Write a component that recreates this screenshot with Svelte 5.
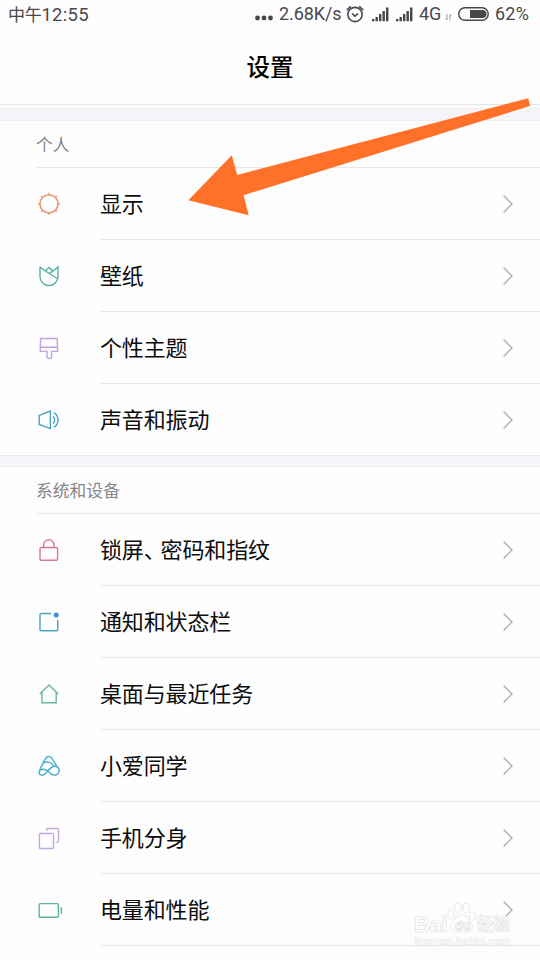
<script lang="ts">
    type Item = { icon: string; label: string };
    type Section = { title: string; items: Item[] };

    const sections: Section[] = [
        {
            title: "个人",
            items: [
                { icon: "display", label: "显示" },
                { icon: "wallpaper", label: "壁纸" },
                { icon: "theme", label: "个性主题" },
                { icon: "sound", label: "声音和振动" }
            ]
        },
        {
            title: "系统和设备",
            items: [
                { icon: "lock", label: "锁屏、密码和指纹" },
                { icon: "notification", label: "通知和状态栏" },
                { icon: "home", label: "桌面与最近任务" },
                { icon: "assistant", label: "小爱同学" },
                { icon: "clone", label: "手机分身" },
                { icon: "battery", label: "电量和性能" }
            ]
        }
    ];

    const rays = [0, 45, 90, 135, 180, 225, 270, 315];
</script>

{#snippet signal()}
    <svg class="signal" width="17" height="15" viewBox="0 0 17 15">
        <path d="M0 12h2.4v2.2H0zM3.5 10h2.4v4.2H3.5zM7 7h2.4v7.2H7zM10.5 4h2.4v10.2h-2.4zM14 .5h2.4v13.7H14z" />
    </svg>
{/snippet}

<div class="screen">
    <div class="status">
        <span class="time">中午<span class="digits">12:55</span></span>
        <svg class="dots" width="18" height="6" viewBox="0 0 18 6">
            <circle cx="2.5" cy="3" r="2.4" />
            <circle cx="9" cy="3" r="2.4" />
            <circle cx="15.5" cy="3" r="2.4" />
        </svg>
        <span class="speed">2.68K/s</span>
        <svg class="alarm" width="18" height="18" viewBox="0 0 18 18">
            <circle cx="9" cy="9.5" r="7.1" />
            <path d="M.8 5.2 4.8 1.4M17.2 5.2l-4-3.8M6 8.5l3 2.6 3-2.6" />
        </svg>
        {@render signal()}
        {@render signal()}
        <span class="network">4G</span>
        <svg class="data" width="7" height="7" viewBox="0 0 7 7">
            <path d="M2 0v6M.3 4.2 2 6M5 6.5v-6M6.7 2.3 5 .5" />
        </svg>
        <svg class="charge" width="31" height="14" viewBox="0 0 31 14">
            <rect class="shell" x=".8" y=".8" width="29.4" height="12.4" rx="6" />
            <path d="M12 3h12.5a4 4 0 0 1 0 8H12z" />
        </svg>
        <span class="percent">62%</span>
    </div>

    <header>设置</header>

    {#each sections as section}
        <div class="gap"></div>
        <section>
            <h2>{section.title}</h2>
            {#each section.items as item}
                <div class="row">
                    <svg class="icon {item.icon}" width="26" height="24" viewBox="0 0 26 24">
                        {#if item.icon === "display"}
                            <circle cx="12" cy="11.8" r="9" />
                            {#each rays as angle}
                                <path d="M12 2.8V.8" transform="rotate({angle} 12 11.8)" />
                            {/each}
                        {:else if item.icon === "wallpaper"}
                            <path d="M3 3v9.6a9 9 0 0 0 18 0V3l-5.2 4.2M3 3l5.4 4L20.8 15M8.4 7 12 3.4l3.8 3.8-3.6 2.4" />
                        {:else if item.icon === "theme"}
                            <path d="M3.6 2.5h16.6l.4 12.9h-6v4.8a2.3 2.3 0 0 1-4.6 0v-4.8H3.2zM3.4 11.3h17" />
                        {:else if item.icon === "sound"}
                            <path d="M2.2 7.4 13.4 3v17.6L2.2 16.4zM16 8.2a5 5 0 0 1 0 7.4M16.8 4.6a8.4 8.4 0 0 1 0 14.6" />
                        {:else if item.icon === "lock"}
                            <rect x="3" y="9.5" width="17.6" height="12.8" rx="1" />
                            <path d="M6.6 9.5V7a5.2 5.2 0 0 1 10.4 0v2.5" />
                        {:else if item.icon === "notification"}
                            <path d="M14 3.5H4a1 1 0 0 0-1 1v15.3a1 1 0 0 0 1 1h15.7a1 1 0 0 0 1-1V10" />
                            <circle class="dot" cx="19.2" cy="5" r="2.5" />
                        {:else if item.icon === "home"}
                            <path d="M2.8 12.1 12 3l9.2 9.1M5 10.4v10.4h14.2V10.4" />
                        {:else if item.icon === "assistant"}
                            <path d="M2.3 17.3C4 12.7 6.3 8.4 8.5 4.7 10.3 1.8 13.6 2 15.2 4.7l5.2 8.4M2.3 17.3c-.8 2.4 1 4.2 3.6 3.8 4.4-.8 5-7.6 11.3-8.8 3.2-.4 5 1.8 4.9 4.5-.2 2.8-2.8 4.4-5.2 4.3-3.6-.2-4.3-4.1-8.4-5.4-2.7-.8-5.3-.2-6.2 1.6M6 9.4c3.6-2.4 8-1.5 11.2 2.9" />
                        {:else if item.icon === "clone"}
                            <rect x="2.4" y="7.5" width="14.1" height="15" rx="1" />
                            <path d="M9.8 5V3.5a1 1 0 0 1 1-1h9.7a1 1 0 0 1 1 1v11.6a1 1 0 0 1-1 1h-1.8" />
                        {:else}
                            <rect x="2.2" y="5.6" width="19.2" height="13.6" rx="1" />
                            <path d="M24.4 9.2v6.6" />
                        {/if}
                    </svg>
                    <div class="body">
                        <span class="label">
                            {#each item.label as char}<span class:comma={char === "、"}>{char}</span>{/each}
                        </span>
                        <svg class="chevron" width="10" height="18" viewBox="0 0 10 18">
                            <path d="M.6.6 9 9 .6 17.4" />
                        </svg>
                    </div>
                </div>
            {/each}
        </section>
    {/each}

    <svg class="pointer" width="344" height="120" viewBox="188 97 344 120">
        <path d="M188.3 200.2 231.8 155.2 237.2 175 528.3 98.2 530 106 243.6 195.2 248.7 215.2z" />
    </svg>

    <div class="watermark">
        <div class="brand">
            <span class="latin">Bai</span>
            <svg width="30" height="32" viewBox="0 0 30 32">
                <ellipse cx="4" cy="12.5" rx="3.2" ry="4.3" />
                <ellipse cx="11" cy="5.6" rx="3.3" ry="4.6" />
                <ellipse cx="19.2" cy="5.8" rx="3.3" ry="4.6" />
                <ellipse cx="25.4" cy="14" rx="3.2" ry="4.3" />
                <path d="M15 12.5c4 0 4.8 4.4 8 7.2 4.2 3.8 2.5 10-2.5 10.3-2.5.1-3.2-.6-5.5-.6s-4 .8-6.5.6C3.6 29.5 2 23.4 6 19.8c3.2-2.9 4.7-7.3 9-7.3z" />
                <text x="7.5" y="27.5">du</text>
            </svg>
            <span class="han">经验</span>
        </div>
        <div class="site">jingyan.baidu.com</div>
    </div>
</div>

<style>
    :global(body) {
        background-color: #fdfdfd;
    }

    .screen {
        position: relative;
        width: 540px;
        height: 960px;
        overflow: hidden;
        background-color: #fdfdfd;
        color: #0c0c0c;
        font-family: "Noto Sans CJK SC", sans-serif;
    }

    svg {
        display: block;
        flex: none;
    }

    .status {
        display: flex;
        align-items: center;
        height: 28px;
        padding: 0 8px;
        box-sizing: border-box;
        color: #48484a;
        fill: #48484a;
        font-family: Roboto, "Noto Sans CJK SC", sans-serif;
        font-size: 18px;
        line-height: 28px;
        white-space: nowrap;
    }

    .time {
        width: 247px;
        font-family: "Noto Sans CJK SC", sans-serif;
        font-size: 17px;
        line-height: 26px;
        letter-spacing: -0.3px;
    }

    .digits {
        font-family: Roboto, sans-serif;
        font-size: 18.5px;
        letter-spacing: 0.3px;
    }

    .dots {
        margin-top: 7px;
    }

    .speed {
        width: 62px;
        margin-left: 6px;
        letter-spacing: -0.1px;
    }

    .alarm {
        margin-left: 5px;
        fill: none;
        stroke: #48484a;
        stroke-width: 1.6;
    }

    .signal {
        margin-left: 7.5px;
    }

    .network {
        width: 24px;
        margin-left: 6px;
    }

    .data {
        margin: 6px 0 0 2px;
        fill: none;
        stroke: #8b8b8d;
        stroke-width: 0.8;
    }

    .charge {
        margin-left: 6px;
    }

    .shell {
        fill: none;
        stroke: #48484a;
        stroke-width: 1.4;
    }

    .percent {
        margin-left: 6px;
        letter-spacing: 0.2px;
    }

    header {
        height: 77px;
        margin-bottom: 3px;
        box-sizing: border-box;
        border-bottom: 1px solid #e6e6e6;
        color: #000;
        font-size: 23.5px;
        font-weight: 500;
        line-height: 76px;
        text-align: center;
    }

    .gap {
        height: 13px;
        box-sizing: border-box;
        border-top: 1px solid #efeef1;
        border-bottom: 1px solid #efeef1;
        background-color: #f6f4f8;
    }

    section + .gap {
        height: 12px;
        border-top-color: #e9e8eb;
    }

    h2 {
        height: 47px;
        margin: 0 0 0 36px;
        box-sizing: border-box;
        border-bottom: 1px solid #e8e8e8;
        color: #868686;
        font-size: 16.8px;
        font-weight: 400;
        line-height: 47px;
    }

    .row {
        display: flex;
        align-items: center;
        height: 72px;
        padding-left: 37px;
    }

    .body {
        flex: 1;
        display: flex;
        align-items: center;
        justify-content: space-between;
        height: 72px;
        margin-left: 37px;
        padding-right: 27px;
        box-sizing: border-box;
        border-bottom: 1px solid #e8e8e8;
    }

    section:not(:last-of-type) .row:last-child {
        height: 71px;
    }

    section:not(:last-of-type) .row:last-child .body {
        height: 71px;
        border-bottom: none;
    }

    .label {
        padding-bottom: 3px;
        font-size: 22px;
        letter-spacing: -0.15px;
        line-height: 68px;
    }

    .comma {
        margin-right: 6px;
        font-feature-settings: "halt";
    }

    .icon,
    .chevron {
        fill: none;
        stroke-width: 1.4;
    }

    .chevron {
        stroke: #b0b0b0;
    }

    .display {
        stroke: #e5a17e;
        stroke-width: 1.7;
    }

    .wallpaper {
        stroke: #58aea5;
    }

    .theme {
        stroke: #c0a3dc;
    }

    .sound {
        stroke: #4ba3bd;
    }

    .lock {
        stroke: #d8798e;
    }

    .notification {
        stroke: #4aa5bd;
    }

    .dot {
        fill: #3d8fd1;
        stroke: none;
    }

    .home {
        stroke: #6bb5a0;
    }

    .assistant {
        stroke: #51b0cc;
        stroke-width: 1.5;
    }

    .clone {
        stroke: #c6a9dc;
    }

    .battery {
        stroke: #60b3a3;
    }

    .pointer {
        position: absolute;
        top: 97px;
        left: 188px;
        fill: #ff7128;
    }

    .watermark {
        position: absolute;
        top: 902px;
        left: 414px;
        width: 100px;
        color: #fff;
        font-family: "Liberation Sans", "Noto Sans CJK SC", sans-serif;
        font-weight: 700;
        -webkit-text-stroke: 0.6px #e0e0e0;
    }

    .brand {
        display: flex;
        height: 33px;
        fill: #fff;
        stroke: #e0e0e0;
        stroke-width: 0.8;
    }

    .latin {
        width: 33px;
        font-size: 22px;
        line-height: 45px;
        letter-spacing: -0.4px;
    }

    .brand text {
        font-size: 13px;
    }

    .han {
        font-family: "Noto Sans CJK SC", sans-serif;
        font-size: 16.5px;
        line-height: 43px;
    }

    .site {
        font-size: 11px;
        line-height: 12px;
        color: #fafafa;
        -webkit-text-stroke: 0.3px #e2e2e2;
    }
</style>
